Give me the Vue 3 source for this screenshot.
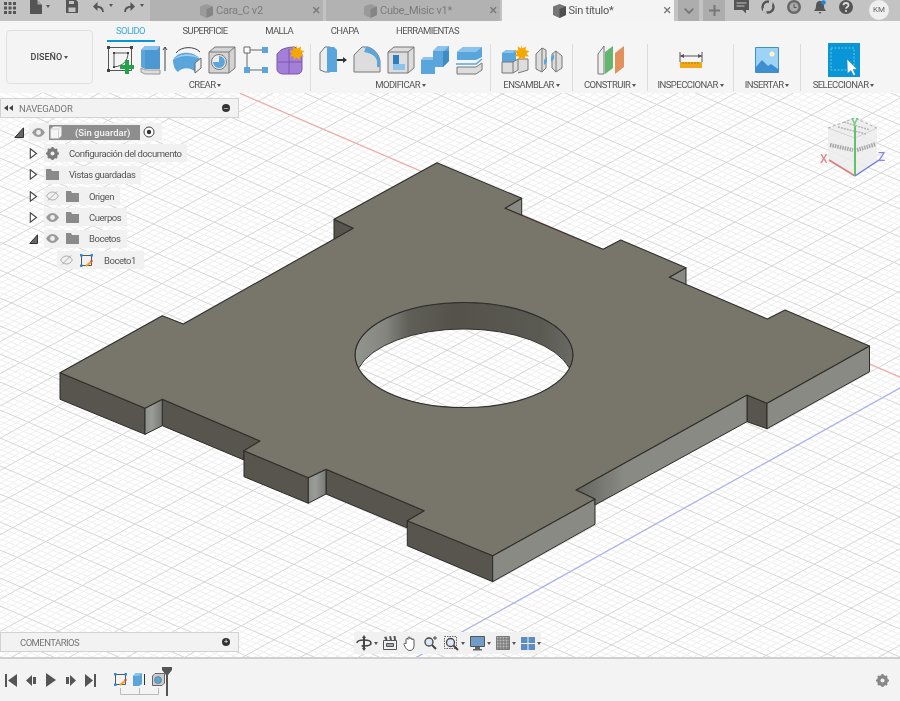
<script setup>
// viewport grid, anchored on the red and blue axes
const slopeA = 0.43
const slopeB = -0.557

function gridPaths(slope, base, step) {
  let minor = ''
  let major = ''
  for (let k = -120; k <= 120; k++) {
    const c = base + (k * step) / 5
    const seg = `M0 ${c.toFixed(1)}L900 ${(c + slope * 900).toFixed(1)}`
    if (k % 5 === 0) major += seg
    else minor += seg
  }
  return { minor, major }
}

const famA = gridPaths(slopeA, -10, 28)
const famB = gridPaths(slopeB, 889, 32.2)
const minorGrid = famA.minor + famB.minor
const majorGrid = famA.major + famB.major

const topFace =
  'M437 162.7L521.7 198.3L505 208.3L603 249.3L620.7 240L686 267.7L669.3 277.3L767.3 319L785 310L869.5 346L767 403.3L747 395L576 490L595 499L492.7 555.7L407.3 520.7L424.3 510.7L326 469.3L308.3 477.7L244 450.7L260 441L162.3 399.3L145 408.3L60 372.7L162.3 315.7L183.3 324L353.3 228.3L334 219.3Z' +
  'M355 355A109 52.5 0 1 0 573 355A109 52.5 0 1 0 355 355Z'

const darkWalls = [
  '60,372.7 145,408.3 145,434.3 60,399.3',
  '162.3,399.3 260,441 244,450.7 244,460 162.3,425.7',
  '244,450.7 308.3,477.7 308.3,503.3 244,476.7',
  '326,469.3 424.3,510.7 407.3,520.7 407.3,528 326,494',
  '407.3,520.7 492.7,555.7 492.7,581.7 407.3,545.7',
  '747,395 767,403.3 767,428.7 747,421.7',
  '334,219.3 353.3,228.3 334,239.3'
]
const lightWalls = [
  '492.7,555.7 595,499 595,524.3 492.7,581.7',
  '767,403.3 869.5,346 869.5,371.7 767,428.7',
  '521.7,198.3 505,208.3 521.7,215.5',
  '686,267.7 669.3,277.3 686,285'
]
const postWalls = [
  '145,408.3 162.3,399.3 162.3,425.7 145,434.3',
  '308.3,477.7 326,469.3 326,494 308.3,503.3'
]
</script>

<template>
  <div class="app">
    <!-- title bar -->
    <header class="topbar">
      <div class="quick">
        <svg class="q-apps" width="12" height="12" viewBox="0 0 12 12"><path fill="#555" d="M0 0h3v3H0zM4.500 0h3v3h-3zM9 0h3v3H9zM0 4.500h3v3H0zM4.500 4.500h3v3h-3zM9 4.500h3v3H9zM0 9h3v3H0zM4.500 9h3v3h-3zM9 9h3v3H9z"/></svg>
        <svg class="q-file" width="12" height="14" viewBox="0 0 12 14"><path fill="#555" d="M0 0h7l5 5v9H0z"/><path fill="#aaa" d="M7.500 .5v4h4z"/></svg>
        <span class="caret q-c1"></span>
        <svg class="q-save" width="12" height="13" viewBox="0 0 12 13"><path fill="#555" d="M0 0h10l2 2v11H0z"/><path fill="#c3c3c3" d="M3 1h5v3H3zM2.500 7.500h7V12h-7z"/></svg>
        <svg class="q-undo" width="11" height="11" viewBox="0 0 11 11"><path fill="none" stroke="#555" stroke-width="1.800" d="M10 10C10 6 7 4.500 2.500 4.500"/><path fill="#555" d="M4.500 0v9L0 4.500z"/></svg>
        <span class="caret q-c2"></span>
        <svg class="q-redo" width="11" height="11" viewBox="0 0 11 11"><path fill="none" stroke="#555" stroke-width="1.800" d="M1 10C1 6 4 4.500 8.500 4.500"/><path fill="#555" d="M6.500 0v9L11 4.500z"/></svg>
        <span class="caret q-c3"></span>
      </div>
      <div class="doc-tab">
        <svg class="cube" width="13" height="14" viewBox="0 0 13 14"><path fill="#9a9a9a" d="M6.500 0L13 2.500V11L6.500 14L0 11V2.500z"/><path fill="#858585" d="M6.500 5L13 2.500V11L6.500 14z"/></svg>
        <span>Cara_C v2</span>
        <i class="close">×</i>
      </div>
      <div class="doc-tab second">
        <svg class="cube" width="13" height="14" viewBox="0 0 13 14"><path fill="#9a9a9a" d="M6.500 0L13 2.500V11L6.500 14L0 11V2.500z"/><path fill="#858585" d="M6.500 5L13 2.500V11L6.500 14z"/></svg>
        <span>Cube_Misic v1*</span>
        <i class="close">×</i>
      </div>
      <div class="doc-tab active">
        <svg class="cube" width="13" height="14" viewBox="0 0 13 14"><path fill="#777" d="M6.500 0L13 2.500V11L6.500 14L0 11V2.500z"/><path fill="#4f4f4f" d="M6.500 5L13 2.500V11L6.500 14z"/></svg>
        <span>Sin título*</span>
        <i class="close">×</i>
      </div>
      <div class="tab-btn chevron">
        <svg width="10" height="6" viewBox="0 0 10 6"><path fill="none" stroke="#777" stroke-width="1.800" d="M.7.700L5 5L9.300.700"/></svg>
      </div>
      <div class="tab-btn plus">
        <svg width="11" height="11" viewBox="0 0 11 11"><path fill="#777" d="M4.500 0h2v4.500H11v2H6.500V11h-2V6.500H0v-2h4.500z"/></svg>
      </div>
      <div class="status">
        <svg width="15" height="14" viewBox="0 0 15 14"><path fill="#555" d="M0 0h15v10h-3v3.500L8.500 10H0z"/><path fill="#c3c3c3" d="M2.500 2.500h10v1h-10zM2.500 5.500h8v1h-8z"/></svg>
        <svg width="14" height="14" viewBox="0 0 14 14"><circle cx="7" cy="7" r="5.500" fill="none" stroke="#555" stroke-width="2.400"/><path fill="#c3c3c3" d="M8 0l4 1-1 5-3-3zM2 8l3 1 1 5-4-2z"/></svg>
        <svg width="14" height="14" viewBox="0 0 14 14"><circle cx="7" cy="7" r="7" fill="#666"/><circle cx="7" cy="7" r="4.500" fill="#aaa"/><path fill="none" stroke="#555" stroke-width="1" d="M7 4v3.500h2.500"/></svg>
        <svg class="bell" width="14" height="14" viewBox="0 0 14 14"><path fill="#555" d="M7 1c3 0 4 2.500 4 5s1 3.500 2 5H1c1-1.500 2-2.500 2-5s1-5 4-5zM5.500 12h3L7 14z"/><circle cx="10.500" cy="2.500" r="2.300" fill="#1e88d8"/></svg>
        <svg width="14" height="14" viewBox="0 0 14 14"><circle cx="7" cy="7" r="7" fill="#555"/><path fill="none" stroke="#ddd" stroke-width="1.800" d="M4.500 5.300C4.500 3.800 5.700 3 7 3s2.500.8 2.500 2.200C9.500 7 7 7 7 8.800"/><circle cx="7" cy="11" r="1.100" fill="#ddd"/></svg>
        <span class="avatar">KM</span>
      </div>
    </header>

    <!-- ribbon -->
    <section class="toolbar">
      <button class="design">DISEÑO <span class="caret"></span></button>
      <div class="ribbon">
        <nav class="ribbon-tabs">
          <span class="on">SOLIDO</span>
          <span>SUPERFICIE</span>
          <span>MALLA</span>
          <span>CHAPA</span>
          <span>HERRAMIENTAS</span>
        </nav>
        <div class="groups">
          <div class="group g-create">
            <div class="icons">
              <svg viewBox="0 0 30 30"><path fill="none" stroke="#555" d="M3.500 2.500h23v23h-23zM9 8h14M9 8v14M23 8C23 16 18 21 9 22"/><path fill="#444" d="M2 1h3v3H2zM25 1h3v3h-3zM2 24h3v3H2zM8 7h2v2H8zM22 7h2v2h-2zM8 21h2v2H8z"/><path fill="#22a34a" d="M20 15h4v5h5v4h-5v5h-4v-5h-5v-4h5z"/></svg>
              <svg viewBox="0 0 30 30"><path fill="#ddd" stroke="#999" d="M2 23l4 2h15v4H6l-4-2z"/><path fill="#5aa5dc" d="M2 5l4-4h15v23H6l-4-2z"/><path fill="#3f8bc6" d="M6 1h15v23H6z" opacity=".5"/><path fill="#8cc3ec" d="M2 5l4-4h15l-3 4z"/><path fill="none" stroke="#444" d="M26 26V2M24 5l2-3 2 3"/></svg>
              <svg viewBox="0 0 30 30"><path fill="none" stroke="#444" d="M3 8C8 1 22 1 27 7"/><path fill="#5aa5dc" d="M0 15C4 6 20 5 27 14l-5 13C18 22 9 22 5 27C2 25 0 20 0 15z"/><path fill="#9fd0f2" d="M0 15C6 8 20 7 27 14C19 10 7 10 0 15z"/><path fill="#eee" stroke="#666" d="M22 18l6-5v10l-6 5z"/></svg>
              <svg viewBox="0 0 30 30"><path fill="#d4d4d4" stroke="#777" d="M2 7l6-5h20v21l-6 5H2z"/><path fill="none" stroke="#777" d="M2 7h20v21M22 7l6-5"/><circle cx="12" cy="17" r="7.500" fill="#eee" stroke="#777"/><path fill="#5aa5dc" d="M12 11a6 6 0 1 1-6 6h6z"/></svg>
              <svg viewBox="0 0 30 30"><path fill="none" stroke="#666" d="M6 5h18M6 5v20M6 25h18"/><path fill="#fff" stroke="#666" d="M3 2h6v6H3z"/><path fill="#5aa5dc" d="M21 2h6v6h-6zM3 22h6v6H3zM21 22h6v6h-6z"/></svg>
              <svg viewBox="0 0 30 30"><path fill="#a47fd8" stroke="#7a58b0" d="M6 5c3-2 9-3 14-3l7 7v15c0 3-2 5-5 5H8c-3 0-6-2-6-5V9z"/><path fill="none" stroke="#7a58b0" d="M3 17h24M14 4v25"/><path fill="#f6a800" d="M21 0l1.500 3.500L26 1.500l-.5 3.800L29.500 6l-3 2.500 2.500 3-3.800-.2L24.500 15l-2.800-2.600L19 15l-.5-3.800-3.700.3 2.400-3-3-2.500 4-.7-.5-3.800 3.500 2z"/></svg>
            </div>
            <div class="label">CREAR <span class="caret"></span></div>
          </div>
          <div class="group g-modify">
            <div class="icons">
              <svg viewBox="0 0 30 30"><path fill="#eee" stroke="#777" d="M2 8l5-6h5v25H7l-5-2z"/><path fill="#5aa5dc" d="M9 2h7l3 3v22h-10z"/><path fill="#333" d="M19 14h6v-2l4 3-4 3v-2h-6z"/></svg>
              <svg viewBox="0 0 30 30"><path fill="#ddd" stroke="#777" d="M2 10l8-8h6c6 2 11 7 12 14v11H2z"/><path fill="#5aa5dc" d="M14 2h2c6 2 11 7 12 14v6h-3V16C24 11 19 8 12 7z"/></svg>
              <svg viewBox="0 0 30 30"><path fill="#ddd" stroke="#777" d="M2 7l6-5h20v21l-6 5H2z"/><path fill="none" stroke="#777" d="M2 7h20v21M22 7l6-5"/><path fill="#2f7fbd" d="M7 10h6v9H7z"/><path fill="#8cc3ec" d="M7 19h12v6H7z"/></svg>
              <svg viewBox="0 0 30 30"><path fill="#5aa5dc" d="M1 15l3-3h9V6l5-5h11v15l-6 6h-8v7H1z"/><path fill="#8cc3ec" d="M13 6l5-5h11l-5 5zM1 15l3-3h9v3z"/><path fill="#3f8bc6" d="M23 6h6v10l-6 6z"/></svg>
              <svg viewBox="0 0 30 30"><path fill="#5aa5dc" d="M3 7l6-5h19v10l-6 3H3z"/><path fill="#8cc3ec" d="M3 7l6-5h19l-6 5z"/><path fill="none" stroke="#5aa5dc" stroke-width="1.500" d="M2 19h20l6-5"/><path fill="#ddd" stroke="#777" d="M3 22h19l6-4v7l-6 4H3z"/></svg>
            </div>
            <div class="label">MODIFICAR <span class="caret"></span></div>
          </div>
          <div class="group g-assemble">
            <div class="icons">
              <svg viewBox="0 0 30 30"><path fill="#5aa5dc" d="M2 8l4-3h10v12H2z"/><path fill="#8cc3ec" d="M2 8l4-3h10l-3 3z"/><path fill="#ddd" stroke="#777" d="M2 17h11v11H2zM13 17l5-3v11l-5 3M18 14h10v11l-10 3"/><path fill="#f6a800" d="M21 0l1.500 3.500L26 1.500l-.5 3.800 4 .7-3 2.500 2.500 3-3.800-.2L24.500 15l-2.800-2.600L19 15l-.5-3.800-3.700.3 2.400-3-3-2.500 4-.7-.5-3.800 3.500 2z"/></svg>
              <svg viewBox="0 0 30 30"><path fill="#ddd" stroke="#777" d="M2 9l6-6 4 2v18l-4 4-6-3zM28 11l-6-5-4 3v14l4 4 6-4z"/><path fill="none" stroke="#777" d="M8 3v24M22 6v21"/><path fill="#5aa5dc" d="M10 15l3-3v5l-3 3zM17 12l3-3v5l-3 3z"/></svg>
            </div>
            <div class="label">ENSAMBLAR <span class="caret"></span></div>
          </div>
          <div class="group g-construct">
            <div class="icons">
              <svg viewBox="0 0 30 30"><path fill="#eee" stroke="#777" d="M3 9l6-8v28H3z"/><path fill="#62b66e" d="M10 7l8-6v22l-8 6z"/><path fill="#e0915c" d="M20 8l9-7v21l-9 7z"/></svg>
            </div>
            <div class="label">CONSTRUIR <span class="caret"></span></div>
          </div>
          <div class="group g-inspect">
            <div class="icons">
              <svg viewBox="0 0 30 30"><path fill="none" stroke="#555" d="M4 7v10M26 7v10M4 11h22"/><path fill="#555" d="M4 11l4-2v4zM26 11l-4-2v4z"/><path fill="#f0a818" d="M4 17h22v6H4z"/><path fill="none" stroke="#a87000" stroke-width=".7" d="M7 17v2M10 17v2M13 17v2M16 17v2M19 17v2M22 17v2"/></svg>
            </div>
            <div class="label">INSPECCIONAR <span class="caret"></span></div>
          </div>
          <div class="group g-insert">
            <div class="icons">
              <svg viewBox="0 0 30 30"><path fill="#9dd4f5" stroke="#3e8fd0" d="M3.500 2.500h23v25h-23z"/><circle cx="20" cy="9" r="2.500" fill="#fff6c8"/><path fill="#3e8fd0" d="M4 22l6-7 6 6 3-2 7 5v3H4z"/></svg>
            </div>
            <div class="label">INSERTAR <span class="caret"></span></div>
          </div>
          <div class="group g-select">
            <div class="icons">
              <svg class="select-icon" viewBox="0 0 32 34"><path fill="#0b95d9" d="M0 0h32v34H0z"/><path fill="none" stroke="#5fd3c6" stroke-dasharray="2 1.500" d="M3 5h23v22H3z"/><path fill="#fff" stroke="#0a6fa8" stroke-width=".4" d="M19 16l10 10-4 .5 2.500 5-2 1-2.500-5-3.500 3z"/></svg>
            </div>
            <div class="label">SELECCIONAR <span class="caret"></span></div>
          </div>
        </div>
      </div>
    </section>

    <!-- canvas -->
    <main class="viewport">
      <svg class="scene" viewBox="0 93 900 565">
        <defs>
          <linearGradient id="holeWall" gradientUnits="userSpaceOnUse" x1="355" y1="0" x2="573" y2="0">
            <stop offset="0" stop-color="#93958f" />
            <stop offset=".14" stop-color="#84857f" />
            <stop offset=".25" stop-color="#5f5e57" />
            <stop offset=".45" stop-color="#54524b" />
            <stop offset=".85" stop-color="#5a5952" />
            <stop offset="1" stop-color="#6a6963" />
          </linearGradient>
          <linearGradient id="postWall">
            <stop offset="0" stop-color="#8d8f8a" />
            <stop offset=".4" stop-color="#9a9c97" />
            <stop offset="1" stop-color="#777872" />
          </linearGradient>
          <linearGradient id="longWall" gradientUnits="userSpaceOnUse" x1="578" y1="0" x2="625" y2="0">
            <stop offset="0" stop-color="#66665f" />
            <stop offset="1" stop-color="#888a83" />
          </linearGradient>
        </defs>
        <rect x="0" y="93" width="900" height="565" fill="#fff" />
        <path :d="minorGrid" stroke="#efefef" stroke-width="1" fill="none" />
        <path :d="majorGrid" stroke="#d6d6d6" stroke-width="1" fill="none" />
        <path d="M240 93.400L900 377.200" stroke="#f3a9a9" stroke-width="1.200" />
        <path d="M900 388L400 666.500" stroke="#aeb2f2" stroke-width="1.200" />

        <polygon v-for="p in darkWalls" :key="p" :points="p" fill="#57554d" stroke="#2b2b28" stroke-linejoin="round" />
        <polygon v-for="p in lightWalls" :key="p" :points="p" fill="#888a83" stroke="#2b2b28" stroke-linejoin="round" />
        <polygon v-for="p in postWalls" :key="p" :points="p" fill="url(#postWall)" stroke="#2b2b28" stroke-linejoin="round" />
        <polygon points="576,490 747,395 747,421.700 595,505 595,499" fill="url(#longWall)" stroke="#2b2b28" stroke-linejoin="round" />
        <path d="M358.500 368.250A109 52.500 0 1 1 569.500 368.250A109 52.500 0 0 0 358.500 368.250Z" fill="url(#holeWall)" stroke="#33332f" />
        <path :d="topFace" fill="#78756a" fill-rule="evenodd" stroke="#2f2f2b" stroke-width="1.100" stroke-linejoin="round" />

        <!-- view cube -->
        <g class="cube-nav">
          <path d="M828 128L855 118L877 128V160L855 176L828 160Z" fill="#ececec" fill-opacity=".85" />
          <path d="M828 128L855 138L877 128M855 138V176" fill="none" stroke="#d4d4d4" />
          <path d="M828 128L855 118L877 128" fill="none" stroke="#aaa" stroke-dasharray="3 2" />
          <path d="M838 127L866 134M844 122L870 130" stroke="#b5b5b5" stroke-width="1.500" stroke-dasharray="2 1" fill="none" />
          <path d="M830 145L853 150M857 150L876 144" stroke="#a5a5a5" stroke-width="4" stroke-dasharray="1.500 1" fill="none" />
          <path d="M855 176L829 160" stroke="#e07a7a" stroke-width="1.500" />
          <path d="M855 176V126" stroke="#5cc46a" stroke-width="2" />
          <path d="M855 176L879 160" stroke="#7078e8" stroke-width="1.500" />
          <text x="820" y="163" class="axis ax-x">X</text>
          <text x="851" y="127" class="axis ax-y">Y</text>
          <text x="878" y="161" class="axis ax-z">Z</text>
        </g>
      </svg>

      <!-- browser panel -->
      <aside class="browser">
        <div class="panel-head">
          <svg width="9" height="6" viewBox="0 0 9 6"><path fill="#444" d="M4 0v6L0 3zM9 0v6L5 3z"/></svg>
          <span>NAVEGADOR</span>
          <i class="round-btn">–</i>
        </div>
        <ul class="tree">
          <li class="row root">
            <svg class="tw" width="10" height="11" viewBox="0 0 10 11"><path fill="#666" stroke="#333" d="M9.500 .8v9.700H.8z"/></svg>
            <div class="pill">
              <svg class="eye" width="13" height="9" viewBox="0 0 13 9"><path fill="#9a9a9a" d="M6.500 0C10 0 12 3 13 4.500 12 6 10 9 6.500 9S1 6 0 4.500C1 3 3 0 6.500 0z"/><circle cx="6.500" cy="4.500" r="2.400" fill="#eee"/></svg>
              <div class="root-name">
                <svg width="12" height="13" viewBox="0 0 12 13"><path fill="#f5f5f5" stroke="#bbb" stroke-width=".6" d="M.5 3L3.500.5h8V10L8.500 12.500H.5z"/><path fill="none" stroke="#bbb" stroke-width=".6" d="M.5 3h8v9.500M8.500 3l3-2.500"/></svg>
                <b>(Sin guardar)</b>
              </div>
              <svg width="12" height="12" viewBox="0 0 12 12"><circle cx="6" cy="6" r="5" fill="#fff" stroke="#444"/><circle cx="6" cy="6" r="2.200" fill="#333"/></svg>
            </div>
          </li>
          <li class="row lv1">
            <svg class="tw" width="8" height="11" viewBox="0 0 8 11"><path fill="#fff" stroke="#444" stroke-width="1.100" d="M.8.800L7 5.500L.8 10.200z"/></svg>
            <div class="pill">
              <svg width="13" height="13" viewBox="0 0 13 13"><circle cx="6.500" cy="6.500" r="4" fill="none" stroke="#7b7b7b" stroke-width="3"/><path stroke="#7b7b7b" stroke-width="2.200" d="M6.500 0v13M0 6.500h13M2 2l9 9M11 2l-9 9"/><circle cx="6.500" cy="6.500" r="2" fill="#eee"/></svg>
              <span class="txt">Configuración del documento</span>
            </div>
          </li>
          <li class="row lv1">
            <svg class="tw" width="8" height="11" viewBox="0 0 8 11"><path fill="#fff" stroke="#444" stroke-width="1.100" d="M.8.800L7 5.500L.8 10.200z"/></svg>
            <div class="pill">
              <svg width="13" height="11" viewBox="0 0 13 11"><path fill="#8a8a8a" d="M0 0h5l1 2h7v9H0z"/></svg>
              <span class="txt">Vistas guardadas</span>
            </div>
          </li>
          <li class="row lv1">
            <svg class="tw" width="8" height="11" viewBox="0 0 8 11"><path fill="#fff" stroke="#444" stroke-width="1.100" d="M.8.800L7 5.500L.8 10.200z"/></svg>
            <div class="pill">
              <svg width="13" height="10" viewBox="0 0 13 10"><path fill="none" stroke="#aaa" d="M.6 5C2 2.500 4 1 6.500 1s4.500 1.500 5.900 4c-1.400 2.500-3.400 4-5.900 4S2 7.500.6 5zM2 9.500L11 .5"/></svg>
              <svg class="fold" width="13" height="11" viewBox="0 0 13 11"><path fill="#8a8a8a" d="M0 0h5l1 2h7v9H0z"/></svg>
              <span class="txt">Origen</span>
            </div>
          </li>
          <li class="row lv1">
            <svg class="tw" width="8" height="11" viewBox="0 0 8 11"><path fill="#fff" stroke="#444" stroke-width="1.100" d="M.8.800L7 5.500L.8 10.200z"/></svg>
            <div class="pill">
              <svg width="13" height="9" viewBox="0 0 13 9"><path fill="#9a9a9a" d="M6.500 0C10 0 12 3 13 4.500 12 6 10 9 6.500 9S1 6 0 4.500C1 3 3 0 6.500 0z"/><circle cx="6.500" cy="4.500" r="2.400" fill="#eee"/></svg>
              <svg class="fold" width="13" height="11" viewBox="0 0 13 11"><path fill="#8a8a8a" d="M0 0h5l1 2h7v9H0z"/></svg>
              <span class="txt">Cuerpos</span>
            </div>
          </li>
          <li class="row lv1">
            <svg class="tw" width="9" height="10" viewBox="0 0 9 10"><path fill="#666" stroke="#333" d="M8.500 .8v8.700H.8z"/></svg>
            <div class="pill">
              <svg width="13" height="9" viewBox="0 0 13 9"><path fill="#9a9a9a" d="M6.500 0C10 0 12 3 13 4.500 12 6 10 9 6.500 9S1 6 0 4.500C1 3 3 0 6.500 0z"/><circle cx="6.500" cy="4.500" r="2.400" fill="#eee"/></svg>
              <svg class="fold" width="13" height="11" viewBox="0 0 13 11"><path fill="#8a8a8a" d="M0 0h5l1 2h7v9H0z"/></svg>
              <span class="txt">Bocetos</span>
            </div>
          </li>
          <li class="row lv2">
            <div class="pill">
              <svg width="13" height="10" viewBox="0 0 13 10"><path fill="none" stroke="#aaa" d="M.6 5C2 2.500 4 1 6.500 1s4.500 1.500 5.900 4c-1.400 2.500-3.400 4-5.900 4S2 7.500.6 5zM2 9.500L11 .5"/></svg>
              <svg class="fold" width="13" height="13" viewBox="0 0 13 13"><path fill="none" stroke="#555" d="M1.500 1.500h10v10h-10z"/><path fill="#2b8fdc" d="M0 0h2.500v2.500H0zM10.500 0H13v2.500h-2.500zM0 10.500h2.500V13H0z"/><path stroke="#f0a020" stroke-width="2" d="M6 12l5-4"/><circle cx="11.500" cy="7" r="1.200" fill="#e04040"/></svg>
              <span class="txt">Boceto1</span>
            </div>
          </li>
        </ul>
      </aside>

      <div class="comments">
        <span>COMENTARIOS</span>
        <i class="round-btn">+</i>
      </div>

      <!-- navigation bar -->
      <div class="navbar">
        <svg width="16" height="16" viewBox="0 0 16 16"><path fill="#444" d="M8 0l2 3H9v10h1l-2 3-2-3h1V3H6z"/><path fill="none" stroke="#444" stroke-width="1.600" d="M1 8c0-2 3-3 7-3s7 1 7 3-3 3-7 3"/><path fill="#444" d="M9 8.500v5L5 11z"/></svg>
        <span class="caret"></span>
        <svg class="gap1" width="14" height="14" viewBox="0 0 14 14"><path fill="none" stroke="#555" d="M.5 4.500h13v9H.5z"/><path fill="#555" d="M1 1l2.500-.5 1 3.500h-2zM6 .5l2-.5 1 4H7zM10.500 0h2l.5 4h-2z"/><path fill="#9ab" stroke="#555" d="M3.500 7.500h7v3h-7z"/></svg>
        <svg class="gap2" width="14" height="15" viewBox="0 0 14 15"><path fill="#fff" stroke="#555" d="M3 8V3.500a1 1 0 0 1 2 0V2a1 1 0 0 1 2 0v1a1 1 0 0 1 2 0v1a1 1 0 0 1 2 0v6c0 3-2 4.500-4 4.500-2.500 0-3.500-1.500-4.500-3L1 8.500C.5 7.500 2 6.500 3 8z"/></svg>
        <svg class="gap2" width="15" height="14" viewBox="0 0 15 14"><circle cx="6" cy="6" r="4" fill="#dbe8f3" stroke="#444" stroke-width="1.300"/><path stroke="#444" stroke-width="2" d="M9 9l4 4"/><path stroke="#444" d="M12 0v4M10 2h4"/></svg>
        <svg class="gap2" width="15" height="15" viewBox="0 0 15 15"><path fill="none" stroke="#666" stroke-dasharray="1.500 1" d="M.5.500h12v12H.5z"/><circle cx="6.500" cy="6.500" r="4" fill="#dbe8f3" stroke="#444" stroke-width="1.300"/><path stroke="#444" stroke-width="2" d="M9.500 9.500l4.500 4.500"/></svg>
        <span class="caret"></span>
        <svg class="gap3" width="15" height="15" viewBox="0 0 15 15"><path fill="#6f9cc9" stroke="#555" d="M.5.500h14v10H.5z"/><path fill="#666" d="M5 11h5v2h2v1.500H3V13h2z"/></svg>
        <span class="caret"></span>
        <svg class="gap3" width="14" height="14" viewBox="0 0 14 14"><path fill="#bbb" stroke="#666" stroke-width=".8" d="M.5.500h13v13H.5zM3 .5v13M6 .5v13M9 .5v13M12 .5v13M.5 3h13M.5 6h13M.5 9h13M.5 12h13"/></svg>
        <span class="caret"></span>
        <svg class="gap3" width="14" height="13" viewBox="0 0 14 13"><path fill="#5e8cc0" d="M0 0h6.500v6H0zM7.500 0H14v6H7.500zM0 7h6.500v6H0zM7.500 7H14v6H7.500z"/></svg>
        <span class="caret"></span>
      </div>
    </main>

    <!-- timeline -->
    <footer class="timeline">
      <svg class="tl-btn" width="12" height="13" viewBox="0 0 12 13"><path fill="#555" d="M0 0h2v13H0zM12 0v13L3 6.500z"/></svg>
      <svg class="tl-btn" width="11" height="11" viewBox="0 0 11 11"><path fill="#555" d="M0 5.500L6 0v11zM7 2h3v7H7z"/></svg>
      <svg class="tl-btn" width="10" height="14" viewBox="0 0 10 14"><path fill="#555" d="M0 0l10 7-10 7z"/></svg>
      <svg class="tl-btn" width="11" height="11" viewBox="0 0 11 11"><path fill="#555" d="M11 5.500L5 0v11zM4 2H1v7h3z"/></svg>
      <svg class="tl-btn" width="11" height="13" viewBox="0 0 11 13"><path fill="#555" d="M11 0H9v13h2zM0 0v13l8-6.500z"/></svg>
      <div class="features">
        <svg width="13" height="13" viewBox="0 0 13 13"><path fill="none" stroke="#555" d="M1.500 1.500h10v10h-10z"/><path fill="#2b8fdc" d="M0 0h2.500v2.500H0zM10.500 0H13v2.500h-2.500zM0 10.500h2.500V13H0z"/><path stroke="#f0a020" stroke-width="2" d="M6 12l5-4"/><circle cx="11.500" cy="7" r="1.200" fill="#e04040"/></svg>
        <svg width="13" height="13" viewBox="0 0 13 13"><path fill="#5aa5dc" d="M0 3l3-3h6v11l-3 2H0z"/><path fill="#8cc3ec" d="M0 3l3-3h6L6 3z"/><path stroke="#333" d="M11.500 12V1"/></svg>
        <svg width="13" height="13" viewBox="0 0 13 13"><path fill="#ccc" stroke="#666" d="M.5 3L3 .5h9.500V10L10 12.500H.5z"/><circle cx="6" cy="7" r="3.500" fill="#5aa5dc" stroke="#666" stroke-width=".6"/></svg>
        <svg class="bracket" width="40" height="9" viewBox="0 0 40 9"><path fill="none" stroke="#bbb" d="M.5 0v6.500h38V0M19.500 0v6"/></svg>
      </div>
      <svg class="marker" width="10" height="29" viewBox="0 0 10 29"><path fill="#555" d="M0 0h10v3L6 8v21H4V8L0 3z"/></svg>
      <svg class="tl-gear" width="13" height="13" viewBox="0 0 13 13"><circle cx="6.500" cy="6.500" r="4" fill="none" stroke="#888" stroke-width="3"/><path stroke="#888" stroke-width="2.200" d="M6.500 0v13M0 6.500h13M2 2l9 9M11 2l-9 9"/><circle cx="6.500" cy="6.500" r="2" fill="#f3f3f3"/></svg>
    </footer>
  </div>
</template>

<style scoped>
.app {
  width: 900px;
  height: 701px;
  display: flex;
  flex-direction: column;
  overflow: hidden;
  font-family: Roboto, "Liberation Sans", sans-serif;
  color: #555;
  filter: blur(0.45px);
}
.caret {
  display: inline-block;
  width: 0;
  height: 0;
  border-left: 2.5px solid transparent;
  border-right: 2.5px solid transparent;
  border-top: 3px solid #555;
  vertical-align: middle;
}

/* title bar */
.topbar {
  height: 21px;
  display: flex;
  background: #c3c3c3;
  flex-shrink: 0;
}
.quick {
  width: 150px;
  position: relative;
  flex-shrink: 0;
}
.quick svg, .quick .caret {
  position: absolute;
}
.q-apps { left: 4px; top: 2px; }
.q-file { left: 30px; top: 0; }
.q-c1 { left: 46px; top: 5px; }
.q-save { left: 66px; top: 0; }
.q-undo { left: 93px; top: 2px; }
.q-c2 { left: 109px; top: 4px; }
.q-redo { left: 124px; top: 2px; }
.q-c3 { left: 140px; top: 4px; }
.doc-tab {
  width: 173px;
  position: relative;
  display: flex;
  align-items: center;
  justify-content: center;
  gap: 3px;
  padding-right: 10px;
  box-sizing: border-box;
  background: #b2b2b2;
  color: #7c7c7c;
  font-size: 11px;
  letter-spacing: -0.25px;
}
.doc-tab.second {
  margin-left: 3px;
  width: 174px;
}
.doc-tab.active {
  margin-left: 2px;
  width: 172px;
  background: #f4f4f4;
  color: #555;
}
.close {
  position: absolute;
  right: 3px;
  top: 1px;
  font-style: normal;
  font-size: 15px;
  line-height: 18px;
  color: #777;
}
.tab-btn {
  display: flex;
  align-items: center;
  justify-content: center;
  background: #adadad;
}
.chevron {
  width: 21px;
  margin-left: 4px;
}
.plus {
  width: 22px;
  margin-left: 4px;
}
.status {
  display: flex;
  align-items: flex-start;
  gap: 12px;
  margin-left: 9px;
  padding-top: 0;
}
.avatar {
  width: 20px;
  height: 20px;
  margin-left: 4px;
  border-radius: 50%;
  background: #efefef;
  color: #666;
  font-size: 8px;
  line-height: 20px;
  text-align: center;
}

/* ribbon */
.toolbar {
  height: 72px;
  display: flex;
  background: #f5f5f5;
  flex-shrink: 0;
}
.design {
  width: 87px;
  height: 54px;
  margin: 9px 7px 0 6px;
  border: 1px solid #e0e0e0;
  border-radius: 4px;
  background: #f4f4f4;
  color: #444;
  font: 500 9px Roboto, "Liberation Sans", sans-serif;
  padding: 0;
}
.ribbon {
  flex: 1;
  display: flex;
  flex-direction: column;
}
.ribbon-tabs {
  height: 21px;
  display: flex;
  gap: 37.5px;
  padding-left: 16px;
  font-size: 9.5px;
  letter-spacing: -0.6px;
  line-height: 20px;
  color: #555;
}
.ribbon-tabs span {
  position: relative;
}
.ribbon-tabs .on {
  color: #3ba9e0;
}
.ribbon-tabs .on::after {
  content: "";
  position: absolute;
  left: -9px;
  right: -10px;
  top: 19px;
  height: 2px;
  background: #0696d7;
}
.groups {
  display: flex;
  height: 47px;
  margin-top: 2px;
}
.group {
  display: flex;
  flex-direction: column;
  align-items: center;
  justify-content: space-between;
  border-right: 1px solid #dcdcdc;
  box-sizing: border-box;
  height: 47px;
}
.g-create { width: 211px; }
.g-modify { width: 180px; }
.g-assemble { width: 82px; }
.g-construct { width: 75px; }
.g-inspect { width: 86px; }
.g-insert { width: 67px; }
.g-select { width: 85px; border-right: 0; }
.icons {
  display: flex;
  gap: 4px;
  height: 32px;
  align-items: center;
}
.icons svg {
  width: 30px;
  height: 30px;
}
.icons .select-icon {
  width: 32px;
  height: 34px;
}
.label {
  font-size: 9.5px;
  letter-spacing: -0.55px;
  line-height: 12px;
  color: #555;
  white-space: nowrap;
}

/* canvas */
.viewport {
  flex: 1;
  position: relative;
  min-height: 0;
}
.scene {
  position: absolute;
  left: 0;
  top: 0;
  width: 900px;
  height: 565px;
}
.axis {
  font: 500 12px Roboto, "Liberation Sans", sans-serif;
}
.ax-x { fill: #e58a8a; }
.ax-y { fill: #6fcb7c; }
.ax-z { fill: #838aec; }

/* floating panels */
.browser {
  position: absolute;
  left: 0;
  top: 5px;
  width: 239px;
}
.panel-head, .comments {
  height: 20px;
  display: flex;
  align-items: center;
  box-sizing: border-box;
  background: #f2f2f2;
  border: 1px solid #d2d2d2;
  font-size: 9.5px;
  color: #777;
}
.panel-head span {
  margin-left: 6px;
  letter-spacing: -0.2px;
}
.panel-head svg {
  margin-left: 3px;
}
.round-btn {
  margin-left: auto;
  margin-right: 8px;
  width: 8px;
  height: 8px;
  border-radius: 50%;
  background: #333;
  color: #fff;
  font: normal 8px/8px "Liberation Sans", sans-serif;
  text-align: center;
}
.tree {
  list-style: none;
  margin: 5px 0 0;
  padding: 0;
}
.row {
  height: 18px;
  margin-bottom: 3.35px;
  display: flex;
  align-items: center;
  font-size: 9.5px;
  color: #555;
}
.pill {
  height: 100%;
  display: flex;
  align-items: center;
  background: rgba(240, 240, 240, 0.95);
  padding: 0 6px 0 2px;
}
.root .tw {
  margin-left: 14px;
}
.root .pill {
  margin-left: 5px;
  padding: 0 7px 0 3px;
}
.root-name {
  display: flex;
  align-items: center;
  width: 91px;
  height: 15px;
  margin: 0 3px 0 4px;
  box-sizing: border-box;
  padding-left: 1px;
  background: #8e8e8e;
}
.root-name b {
  margin-left: 13px;
  color: #f4f4f4;
  font-weight: 500;
}
.lv1 .tw {
  margin-left: 29px;
  width: 9px;
}
.lv1 .pill {
  margin-left: 6px;
}
.lv2 .pill {
  margin-left: 57px;
  padding: 0 8px 0 3px;
}
.txt {
  margin-left: 10px;
  white-space: nowrap;
  letter-spacing: -0.45px;
}
.lv2 .txt {
  margin-left: 11px;
}
.fold {
  margin-left: 7px;
}
.comments {
  position: absolute;
  left: 0;
  top: 539px;
  width: 239px;
}
.comments span {
  margin-left: 19px;
  letter-spacing: -0.55px;
}
.navbar {
  position: absolute;
  left: 354px;
  top: 539px;
  width: 187px;
  height: 22px;
  box-sizing: border-box;
  padding-left: 2px;
  display: flex;
  align-items: center;
  gap: 2px;
  background: #f1f1f1;
}
.gap1 { margin-left: 3px; }
.gap2 { margin-left: 4px; }
.gap3 { margin-left: 3px; }

/* timeline */
.timeline {
  height: 44px;
  flex-shrink: 0;
  box-sizing: border-box;
  border-top: 2px solid #cfcfcf;
  background: #f3f3f3;
  display: flex;
  align-items: center;
  padding-left: 5px;
  position: relative;
}
.tl-btn {
  margin-right: 9px;
}
.features {
  display: flex;
  gap: 6px;
  margin-left: 9px;
  position: relative;
  align-self: flex-start;
  margin-top: 14px;
}
.bracket {
  position: absolute;
  left: 6px;
  top: 15px;
}
.marker {
  position: absolute;
  left: 162px;
  top: 8px;
}
.tl-gear {
  margin-left: auto;
  margin-right: 11px;
}
</style>
